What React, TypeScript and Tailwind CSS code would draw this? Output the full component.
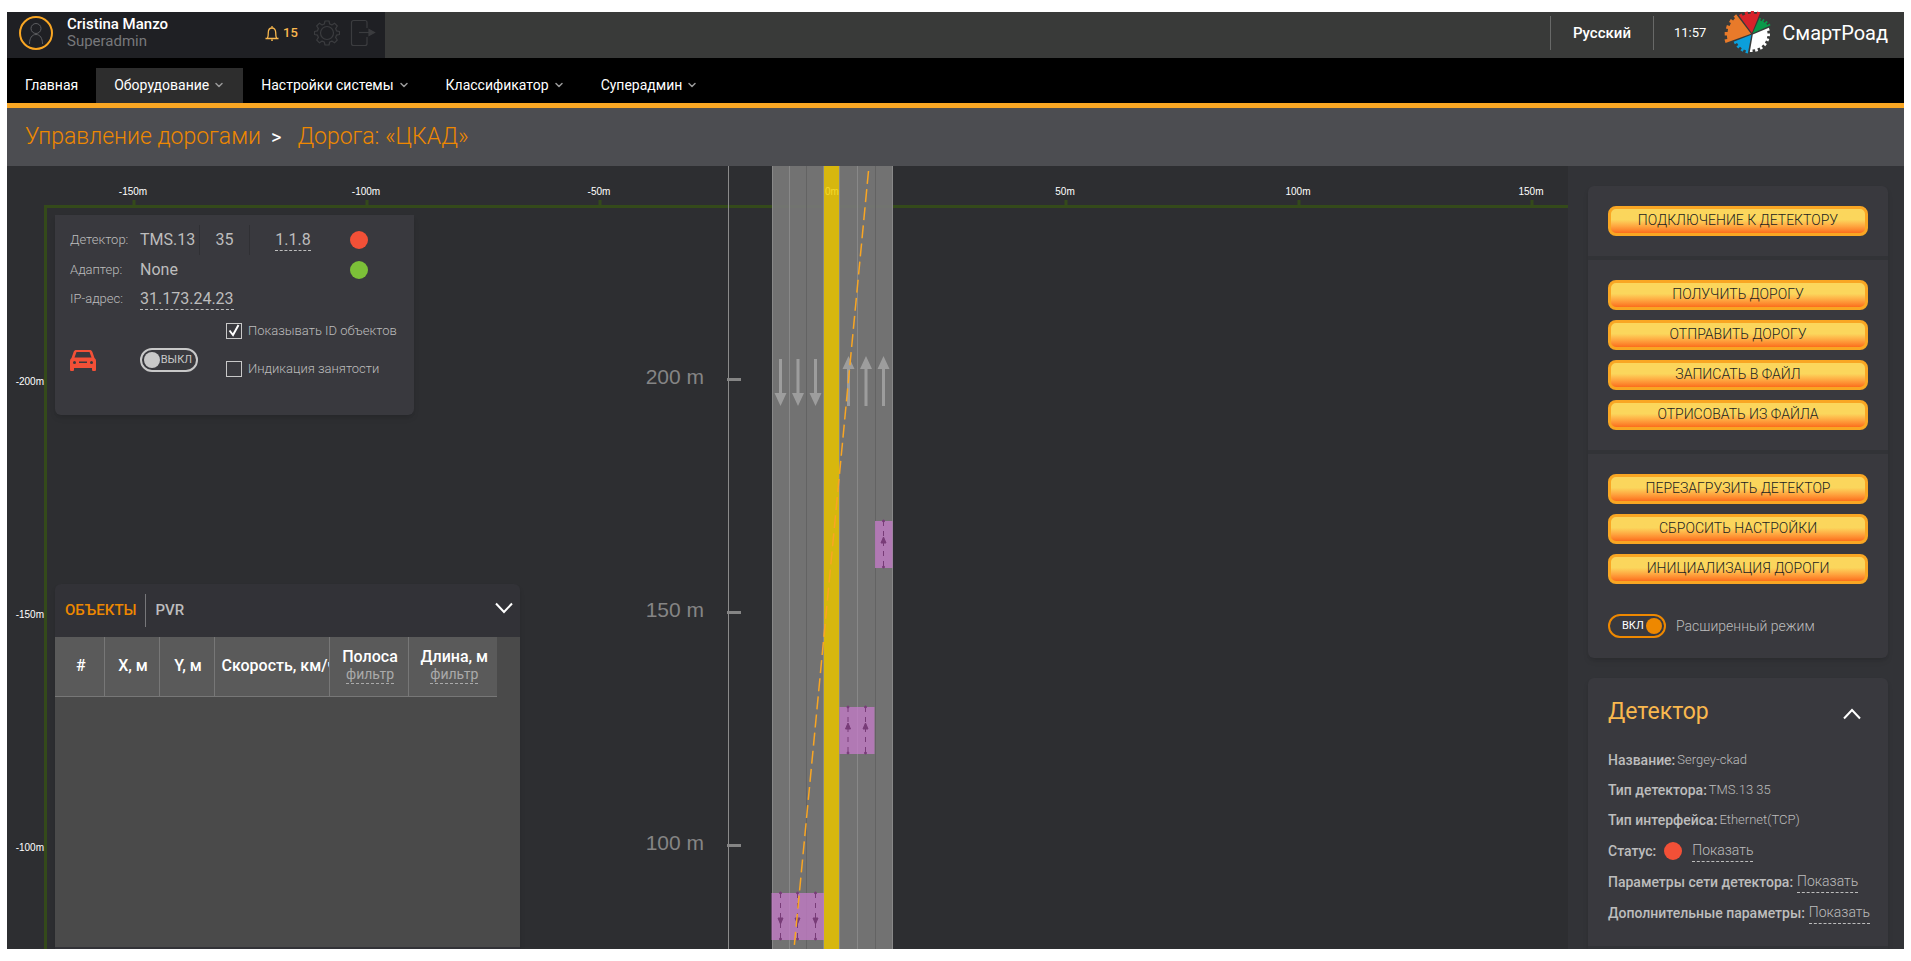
import React, { useState } from "react";
import { ChevronDown } from "lucide-react";

const ORANGE = "#f9a623";

const navItems = [
  { label: "Главная", dropdown: false, active: false },
  { label: "Оборудование", dropdown: true, active: true },
  { label: "Настройки системы", dropdown: true, active: false },
  { label: "Классификатор", dropdown: true, active: false },
  { label: "Суперадмин", dropdown: true, active: false },
];

const actionGroups = [
  ["Подключение к детектору"],
  ["Получить дорогу", "Отправить дорогу", "Записать в файл", "Отрисовать из файла"],
  ["Перезагрузить детектор", "Сбросить настройки", "Инициализация дороги"],
];

const columns = [
  { label: "#", width: "w-[49px]", filter: false },
  { label: "X, м", width: "w-[55px]", filter: false },
  { label: "Y, м", width: "w-[55px]", filter: false },
  { label: "Скорость, км/ч", width: "w-[115px]", filter: false },
  { label: "Полоса", width: "w-[79px]", filter: true },
  { label: "Длина, м", width: "w-[89px]", filter: true },
];

// Toothed wedge of the logo wheel. Angles in degrees, clockwise from the x axis.
const gearWedge = (from: number, to: number, r0: number, r1: number, teeth: number) => {
  const steps = teeth * 2 - 1;
  const points: string[] = [];
  const point = (deg: number, r: number) => {
    const rad = (deg * Math.PI) / 180;
    return `${(28 + r * Math.cos(rad)).toFixed(1)},${(24 + r * Math.sin(rad)).toFixed(1)}`;
  };
  points.push(point((from + to) / 2, 1));
  for (let i = 0; i < steps; i++) {
    const a = from + ((to - from) * i) / steps;
    const b = from + ((to - from) * (i + 1)) / steps;
    const r = r0 + ((r1 - r0) * i) / steps - (i % 2 ? 2.5 : 0);
    points.push(point(a, r), point(b, r));
  }
  return points.join(" ");
};

const Logo = () => (
  <svg width="48" height="46" viewBox="0 0 48 46" aria-hidden="true">
    <polygon points={gearWedge(161, 231, 28, 25, 5)} fill="#e87a2a" />
    <polygon points={gearWedge(235, 291, 23, 23, 4)} fill="#d8232a" />
    <polygon points={gearWedge(295, 335, 18, 21, 4)} fill="#0a9a4a" />
    <polygon points={gearWedge(340, 457, 18, 18, 7)} fill="#ffffff" />
    <polygon points={gearWedge(102, 157, 20, 20, 4)} fill="#0b9fdb" />
  </svg>
);

const GearIcon = () => (
  <svg width="26" height="26" viewBox="0 0 26 26" fill="none" stroke="currentColor" strokeWidth="1.2">
    <circle cx="13" cy="13" r="6.5" />
    <path
      d="M11 1h4l.7 3 2.2.9 2.600-1.700 2.800 2.800-1.700 2.600.9 2.200 3 .7v3l-3 .7-.9 2.200 1.700 2.600-2.800 2.800-2.600-1.700-2.200.9-.7 3h-4l-.7-3-2.200-.9-2.600 1.700-2.800-2.800 1.700-2.600-.9-2.200-3-.7v-3l3-.7.9-2.200-1.700-2.600 2.800-2.800 2.600 1.700 2.200-.9z"
      strokeLinejoin="round"
    />
  </svg>
);

const ExitIcon = () => (
  <svg width="26" height="28" viewBox="0 0 26 28" fill="none" stroke="currentColor" strokeWidth="1.2">
    <path d="M17 9V3.500a2 2 0 0 0-2-2H3.500a2 2 0 0 0-2 2v21a2 2 0 0 0 2 2H15a2 2 0 0 0 2-2V18" />
    <path d="M9 13.500h12" />
    <path d="M19 10.500l5.500 3-5.500 3z" fill="currentColor" />
  </svg>
);

const Header = () => (
  <header className="flex h-[46px] shrink-0 bg-[#393a39]">
    <div className="flex w-[378px] items-center bg-[#1f2024] pb-1 pl-3">
      <svg width="34" height="34" viewBox="0 0 34 34" fill="none" aria-hidden="true">
        <circle cx="17" cy="17" r="16" stroke={ORANGE} strokeWidth="2" />
        <g stroke="#5c5d60" strokeWidth="1">
          <circle cx="17" cy="12.500" r="5" />
          <path d="M10.500 28c0-6 2.500-9.500 6.500-9.500s6.500 3.500 6.500 9.500" />
        </g>
      </svg>
      <div className="ml-3.5 w-[198px] text-[15px] leading-[17px]">
        <p className="font-medium text-white">Cristina Manzo</p>
        <p className="text-[#77787b]">Superadmin</p>
      </div>
      <button className="flex items-center gap-1 text-[13px] font-medium text-[#f9b84e]" aria-label="Уведомления">
        <svg width="14" height="16" viewBox="0 0 14 16" fill="none" stroke="currentColor" strokeWidth="1.300">
          <path d="M.5 13.500h13M2.500 13c.8-1.500.8-3 .8-5.500C3.300 4.500 4.800 3 7 3s3.700 1.500 3.700 4.500c0 2.500 0 4 .8 5.500M7 3V1" />
          <path d="M6 15.200h2" />
        </svg>
        15
      </button>
      <button className="ml-4 text-[#3b3c3f]" aria-label="Настройки">
        <GearIcon />
      </button>
      <button className="ml-2.5 text-[#3b3c3f]" aria-label="Выход">
        <ExitIcon />
      </button>
    </div>
    <div className="ml-auto flex items-center pr-4 pb-1">
      <button className="h-[34px] border-x border-[#686968] px-[22px] text-[15px] font-medium text-white">
        Русский
      </button>
      <time className="ml-5 text-[13px] text-white">11:57</time>
      <div className="ml-[18px] flex items-center gap-2.5">
        <Logo />
        <span className="text-xl text-white">СмартРоад</span>
      </div>
    </div>
  </header>
);

const Nav = () => (
  <nav className="flex h-[50px] shrink-0 items-end border-b-[5px] border-[#f9a623] bg-black">
    {navItems.map((item) => (
      <a
        key={item.label}
        href="#"
        className={`flex h-[35px] items-center gap-1 px-[18px] pb-0.5 text-sm text-white ${
          item.active ? "bg-[#2d2d2d]" : ""
        }`}
      >
        {item.label}
        {item.dropdown && <ChevronDown className="h-3 w-3 text-[#999]" strokeWidth={3} />}
      </a>
    ))}
  </nav>
);

interface ToggleProps {
  checked: boolean;
  onChange: (value: boolean) => void;
  label: string;
}

const Toggle: React.FC<ToggleProps> = ({ checked, onChange, label }) => (
  <label
    className={`flex h-6 w-[58px] cursor-pointer items-center justify-between rounded-full border-2 px-0.5 text-[11px] ${
      checked
        ? "flex-row-reverse border-[#ee8800] text-white"
        : "border-[#c8c8c8] text-[#c8c8c8]"
    }`}
  >
    <input
      type="checkbox"
      role="switch"
      className="sr-only"
      aria-label={label}
      checked={checked}
      onChange={(e) => onChange(e.target.checked)}
    />
    <span className={`h-4 w-4 rounded-full ${checked ? "bg-[#ee8800]" : "bg-[#c8c8c8]"}`} />
    <span className={checked ? "ml-2.5" : "mr-0.5"}>{checked ? "ВКЛ" : "ВЫКЛ"}</span>
  </label>
);

const Checkbox: React.FC<ToggleProps> = ({ checked, onChange, label }) => (
  <label className="flex h-5 cursor-pointer items-center gap-1.5 text-[13px] font-light whitespace-nowrap">
    <span className="grid">
      <input
        type="checkbox"
        className="col-start-1 row-start-1 h-4 w-4 appearance-none border border-[#c8c8c8]"
        checked={checked}
        onChange={(e) => onChange(e.target.checked)}
      />
      {checked && (
        <svg className="pointer-events-none col-start-1 row-start-1" width="16" height="16" viewBox="0 0 16 16">
          <path d="M3.500 7.500l3.500 4.500 5.500-10" fill="none" stroke="#fff" strokeWidth="2" />
        </svg>
      )}
    </span>
    {label}
  </label>
);

const PX_PER_50M = 233;
const ZERO_X = 825;
const laneLines = [765, 782, 799, 816, 832, 850, 868, 885];

const Zone = ({ x, y, lanes, down }: { x: number; y: number; lanes: number[]; down?: boolean }) => (
  <g>
    <rect x={x} y={y} width={lanes.length * 17.5} height="47" fill="#c77ccb" fillOpacity=".75" />
    {lanes.map((cx) => (
      <g key={cx} stroke="#783c78" fill="#783c78">
        <line x1={cx} x2={cx} y1={y} y2={y + 47} strokeDasharray="5 5" />
        <circle cx={cx} cy={y} r="1" />
        <circle cx={cx} cy={y + 46} r="1" />
        <path
          d={down ? `M${cx - 2.5} ${y + 25}h5l-2.500 6z` : `M${cx - 2.5} ${y + 22}h5l-2.500 -6z`}
        />
      </g>
    ))}
  </g>
);

const RoadCanvas = () => (
  <svg className="absolute inset-0 h-full w-full" role="img" aria-label="Схема дороги">
    <g stroke="#344a1a" strokeWidth="3">
      <line x1="37" x2="100%" y1="40.500" y2="40.500" />
      <line x1="38.500" x2="38.500" y1="40" y2="100%" />
      {[-3, -2, -1, 0, 1, 2, 3].map((n) => (
        <line key={n} x1={ZERO_X + n * PX_PER_50M + 1} x2={ZERO_X + n * PX_PER_50M + 1} y1="34" y2="41" />
      ))}
    </g>
    <g className="fill-white font-['Liberation_Sans',Arial,sans-serif] text-[10px]">
      {[-3, -2, -1, 1, 2, 3].map((n) => (
        <text key={n} x={ZERO_X + n * PX_PER_50M} y="29" textAnchor="middle">
          {n * 50}m
        </text>
      ))}
      {[-200, -150, -100].map((m, i) => (
        <text key={m} x="37" y={219 + i * PX_PER_50M} textAnchor="end">
          {m}m
        </text>
      ))}
    </g>

    {/* distance scale */}
    <line x1="721.500" x2="721.500" y1="0" y2="100%" stroke="#8a8a8a" />
    <g className="fill-[#858585] font-['Liberation_Sans',Arial,sans-serif] text-[21px]">
      {[200, 150, 100].map((m, i) => (
        <g key={m}>
          <text x="697" y={218 + i * PX_PER_50M} textAnchor="end">
            {m} m
          </text>
          <rect x="720" y={212 + i * PX_PER_50M} width="14" height="3" />
        </g>
      ))}
    </g>

    {/* lanes */}
    <rect x="765" y="0" width="120" height="100%" fill="#777" fillOpacity=".93" />
    <rect x="817" y="0" width="15" height="100%" fill="#dcbb08" fillOpacity=".95" />
    {laneLines.map((x, i) => (
      <line
        key={x}
        x1={x + 0.5}
        x2={x + 0.5}
        y1="0"
        y2="100%"
        stroke={i === 2 || i === 6 ? "#636363" : "#888"}
      />
    ))}
    <text
      x={ZERO_X}
      y="29"
      textAnchor="middle"
      className="fill-[#f5d92c] font-['Liberation_Sans',Arial,sans-serif] text-[10px]"
    >
      0m
    </text>

    <g fill="#9d9d9d">
      {[773.5, 791, 808.5].map((x) => (
        <path key={x} d={`M${x - 1.5} 193h3v34h4.500l-6 13-6-13h4.500z`} />
      ))}
      {[841.5, 859, 876.5].map((x) => (
        <path key={x} d={`M${x - 1.5} 240h3v-37h4.500l-6-13-6 13h4.500z`} />
      ))}
    </g>

    <Zone x={868} y={355} lanes={[876.5]} />
    <Zone x={832.5} y={541} lanes={[841, 858.5]} />
    <Zone x={764.5} y={727} lanes={[773.5, 790.5, 808.5]} down />
    <line x1="861.500" y1="5" x2="787" y2="783" stroke={ORANGE} strokeWidth="1.500" strokeDasharray="13 5.200" />
  </svg>
);

const InfoPanel = () => {
  const [showIds, setShowIds] = useState(true);
  const [occupancy, setOccupancy] = useState(false);
  const [enabled, setEnabled] = useState(false);

  return (
    <section className="absolute top-[49px] left-12 h-[200px] w-[359px] rounded-b-md bg-[#39393e] px-[15px] pt-2.5 text-[#bdbdbd] shadow-md">
      <div className="grid grid-cols-[70px_60px_50px_100px_18px] items-center">
        <span className="text-[13px] font-light">Детектор:</span>
        <span className="flex h-[30px] items-center border-r border-[#303034]">TMS.13</span>
        <span className="flex h-[30px] items-center justify-center border-r border-[#303034]">35</span>
        <a href="#" className="mr-3.5 justify-self-center border-b border-dashed leading-5">1.1.8</a>
        <span className="h-[18px] w-[18px] rounded-full bg-[#f25037]" />
      </div>
      <div className="grid h-[30px] grid-cols-[70px_210px_18px] items-center">
        <span className="text-[13px] font-light">Адаптер:</span>
        <span>None</span>
        <span className="h-[18px] w-[18px] rounded-full bg-[#7cc038]" />
      </div>
      <div className="grid h-7 grid-cols-[70px_auto_1fr] items-center">
        <span className="text-[13px] font-light">IP-адрес:</span>
        <a href="#" className="border-b border-dashed leading-5">31.173.24.23</a>
      </div>
      <div className="mt-2 flex">
        <div className="grid grid-cols-[70px_86px] items-center pt-5">
          <svg width="26" height="21" viewBox="0 0 26 21" fill="#f25037" fillRule="evenodd" aria-hidden="true">
            <path d="M6.500 0h13c1.500 0 2.300.5 2.800 1.800L24.500 8C25.500 8.800 26 9.800 26 11v8.500c0 1-.5 1.500-1.500 1.500h-1c-1 0-1.500-.5-1.500-1.500V18H4v1.500C4 20.500 3.500 21 2.500 21h-1C.5 21 0 20.500 0 19.500V11c0-1.200.5-2.200 1.500-3l2.200-6.200C4.200.5 5 0 6.500 0zM6.500 2L4.500 7.500h17L19.500 2zM4.500 11a1.500 1.500 0 1 0 0 3 1.500 1.500 0 0 0 0-3zM21.500 11a1.500 1.500 0 1 0 0 3 1.500 1.500 0 0 0 0-3zM9 11.500v1.500h8v-1.500z" />
          </svg>
          <Toggle checked={enabled} onChange={setEnabled} label="Отображение машин" />
        </div>
        <div className="flex flex-col gap-[18px]">
          <Checkbox checked={showIds} onChange={setShowIds} label="Показывать ID объектов" />
          <Checkbox checked={occupancy} onChange={setOccupancy} label="Индикация занятости" />
        </div>
      </div>
    </section>
  );
};

const ObjectsPanel = () => (
  <section className="absolute bottom-0 left-12 flex h-[365px] w-[465px] flex-col rounded-t-md bg-[#323237] shadow-md">
    <div className="flex h-[53px] items-center pr-[7px] pl-2.5 text-[15px]">
      <button className="font-medium text-[#ee8800]">ОБЪЕКТЫ</button>
      <button className="ml-2 h-[33px] border-l border-[#77777a] pl-2.5 font-medium text-[#bdbdbd]">PVR</button>
      <button className="mb-1.5 ml-auto" aria-label="Свернуть">
        <svg width="18" height="12" viewBox="0 0 18 12" fill="none" stroke="#fff" strokeWidth="2">
          <path d="M1 1.500l8 8.500 8-8.500" />
        </svg>
      </button>
    </div>
    <div className="mb-0.5 flex-1 bg-[#4a4a4a]">
      <table className="w-[442px] table-fixed border-collapse">
        <thead>
          <tr className="h-[59px] border-b border-[#777] bg-[#5a5a5a]">
            {columns.map((col) => (
              <th
                key={col.label}
                className={`${col.width} overflow-hidden border-r border-[#777] pl-[7px] pr-1 leading-[18px] font-medium whitespace-nowrap text-white last:border-r-0`}
              >
                {col.label}
                {col.filter && (
                  <button className="mx-auto block border-b border-dashed border-[#aaa] text-sm leading-[17px] font-normal text-[#aaa]">
                    фильтр
                  </button>
                )}
              </th>
            ))}
          </tr>
        </thead>
        <tbody />
      </table>
    </div>
  </section>
);

const Sidebar = () => {
  const [advanced, setAdvanced] = useState(true);

  return (
    <aside className="flex w-[336px] shrink-0 flex-col gap-5 overflow-hidden bg-[#323337] pt-5 pr-4 pl-5 text-sm text-[#bdbdbd]">
      <section className="shrink-0 divide-y-4 divide-[#323337] rounded-md bg-[#39393e] shadow-md">
        {actionGroups.map((group, i) => (
          <div key={i} className="flex flex-col gap-2.5 p-5">
            {group.map((action) => (
              <button
                key={action}
                className="h-[30px] rounded-lg border-[3px] border-[#f9a623] bg-linear-to-b from-[#fbd65c] from-45% to-[#fb6d1c] pb-0.5 text-sm leading-[22px] font-light text-[#222] uppercase"
              >
                {action}
              </button>
            ))}
            {i === actionGroups.length - 1 && (
              <div className="mt-5 flex items-center gap-2.5">
                <Toggle checked={advanced} onChange={setAdvanced} label="Расширенный режим" />
                <span className="font-light">Расширенный режим</span>
              </div>
            )}
          </div>
        ))}
      </section>

      <section className="shrink-0 rounded-t-md border-b-4 border-[#323337] bg-[#39393e] px-5 pt-5 pb-[18px] shadow-md">
        <div className="flex h-7 items-center justify-between pr-[7px]">
          <h2 className="text-[23px] text-[#f9b84e]">Детектор</h2>
          <button className="pt-1" aria-label="Свернуть">
            <svg width="18" height="12" viewBox="0 0 18 12" fill="none" stroke="#fff" strokeWidth="2">
              <path d="M1 10.500L9 2l8 8.500" />
            </svg>
          </button>
        </div>
        <dl className="mt-[19px] font-light">
          <div className="flex h-[30px] items-center gap-0.5">
            <dt className="font-medium">Название:</dt>
            <dd className="text-[13px]">Sergey-ckad</dd>
          </div>
          <div className="flex h-[30px] items-center gap-0.5">
            <dt className="font-medium">Тип детектора:</dt>
            <dd className="text-[13px]">TMS.13 35</dd>
          </div>
          <div className="flex h-[30px] items-center gap-0.5">
            <dt className="font-medium">Тип интерфейса:</dt>
            <dd className="text-[13px]">Ethernet(TCP)</dd>
          </div>
          <div className="flex h-[31px] items-center gap-2">
            <dt className="font-medium">Статус:</dt>
            <dd className="flex items-center gap-2.5">
              <span className="h-[18px] w-[18px] rounded-full bg-[#f25037]" />
              <a href="#" className="border-b border-dashed leading-[22px]">Показать</a>
            </dd>
          </div>
          {["Параметры сети детектора:", "Дополнительные параметры:"].map((label) => (
            <div key={label} className="flex h-[31px] items-center gap-1 whitespace-nowrap">
              <dt className="font-medium">{label}</dt>
              <dd>
                <a href="#" className="block border-b border-dashed leading-[22px]">Показать</a>
              </dd>
            </div>
          ))}
        </dl>
      </section>
    </aside>
  );
};

const App: React.FC = () => {
  return (
    <div className="flex h-screen flex-col bg-white px-[7px] py-3 font-[Roboto,sans-serif]">
      <Header />
      <Nav />
      <div className="flex h-[58px] shrink-0 items-center bg-[#4c4d51] pl-[18px] text-[23px] font-light text-[#ee8800]">
        <a href="#">Управление дорогами</a>
        <span className="mr-4 ml-2.5 text-xl font-normal text-white">&gt;</span>
        <h1>Дорога: «ЦКАД»</h1>
      </div>
      <div className="flex min-h-0 flex-1">
        <main className="relative min-w-0 flex-1 overflow-hidden bg-[#2d2e31]">
          <RoadCanvas />
          <InfoPanel />
          <ObjectsPanel />
        </main>
        <Sidebar />
      </div>
    </div>
  );
};

export default App;
